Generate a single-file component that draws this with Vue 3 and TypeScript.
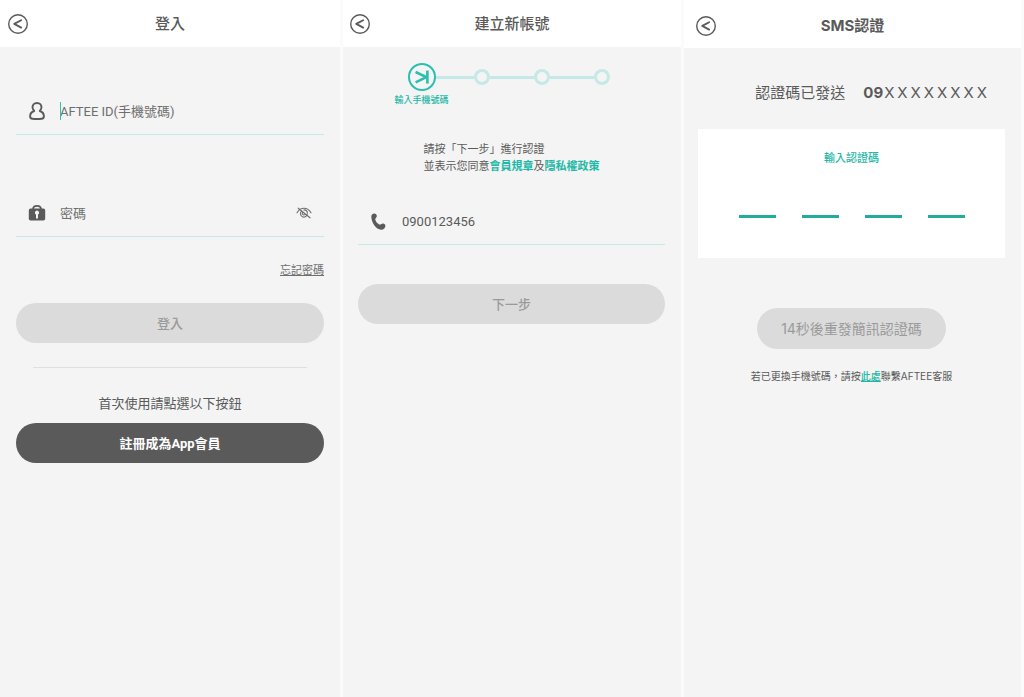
<script setup lang="ts">
import { ref } from 'vue'

const account = ref('')
const password = ref('')
const phone = ref('0900123456')
const code = ref<string[]>(['', '', '', ''])
const steps: string[] = ['輸入手機號碼', '', '', '']
const prefix = '09'
const masked: string[] = 'XXXXXXXX'.split('')
const seconds = ref(14)
</script>

<template>
  <main class="screens">
    <section class="panel">
      <header class="bar">
        <button type="button" class="back" aria-label="返回">
          <svg viewBox="0 0 20 20" width="20" height="20">
            <circle cx="10" cy="10" r="9.3" />
            <path d="M13.2 6.200 6.200 9.900l7 3.700" />
          </svg>
        </button>
        <h1>登入</h1>
      </header>
      <form class="body login" @submit.prevent>
        <label class="field">
          <svg class="icon" viewBox="0 0 18 20" width="18" height="20">
            <path
              class="outline"
              d="M9 2c2.700 0 4.500 1.900 4.500 4.300 0 1.500-.7 2.600-1.700 3.700 2.500.8 4.100 2.600 4.100 5.300 0 1.600-.7 2.400-2.300 2.500-3 .3-6.200.3-9.200 0-1.600-.1-2.300-.9-2.300-2.500 0-2.700 1.600-4.500 4.100-5.300-1-1.100-1.700-2.200-1.700-3.700C4.500 3.900 6.300 2 9 2z"
            />
          </svg>
          <span class="entry focused">
            <input v-model="account" type="text" placeholder="AFTEE ID(手機號碼)" aria-label="AFTEE ID" />
          </span>
        </label>
        <div class="field second">
          <svg class="icon" viewBox="0 0 18 20" width="18" height="20">
            <path class="outline" d="M5.200 6.500V5.800C5.200 3.800 6.800 2.900 9 2.900s3.800.9 3.800 2.900v.7" />
            <path
              class="solid"
              fill-rule="evenodd"
              d="M2.600 5.600h12.800a1.800 1.800 0 0 1 1.800 1.800v8.300a1.800 1.800 0 0 1-1.800 1.800H2.600a1.800 1.800 0 0 1-1.800-1.800V7.400a1.800 1.800 0 0 1 1.800-1.800zM9 7.600a2.100 2.100 0 0 0-1 3.950V15.500h2v-3.950A2.100 2.100 0 0 0 9 7.600z"
            />
          </svg>
          <span class="entry">
            <input v-model="password" type="password" placeholder="密碼" aria-label="密碼" />
          </span>
          <button type="button" class="eye" aria-label="顯示密碼">
            <svg viewBox="0 0 16 14" width="16" height="14">
              <path d="M1 6.800C2.700 3.700 5.100 2.200 8 2.200s5.300 1.500 7 4.600" />
              <path d="M11.200 8.200a3.400 3.400 0 1 1-5.600-3.100M8 3.900a3.400 3.400 0 0 1 3.400 3.200" />
              <path d="M6.600 6.500a1.500 1.500 0 0 0 2.100 2.100M2.200 2.200l11.800 9.600" />
            </svg>
          </button>
        </div>
        <a class="forgot" href="#forgot">忘記密碼</a>
        <button type="submit" class="pill" disabled>登入</button>
        <hr />
        <p class="hint">首次使用請點選以下按鈕</p>
        <button type="button" class="pill dark">註冊成為App會員</button>
      </form>
    </section>

    <section class="panel">
      <header class="bar create">
        <button type="button" class="back" aria-label="返回">
          <svg viewBox="0 0 20 20" width="20" height="20">
            <circle cx="10" cy="10" r="9.3" />
            <path d="M13.2 6.200 6.200 9.900l7 3.700" />
          </svg>
        </button>
        <h1>建立新帳號</h1>
      </header>
      <form class="body signup" @submit.prevent>
        <ol class="steps">
          <li v-for="(step, i) in steps" :key="i" :class="{ current: i === 0 }">
            <svg v-if="i === 0" viewBox="0 0 28 28" width="28" height="28">
              <circle cx="14" cy="14" r="13" />
              <path d="M7.600 9 18.400 14.200 7.600 19.400" />
              <path d="M19.400 7.600v13" />
            </svg>
            <i v-else class="dot"></i>
            <span v-if="step" class="caption">{{ step }}</span>
          </li>
        </ol>
        <p class="terms">
          請按「下一步」進行認證<br />並表示您同意<a href="#rules">會員規章</a>及<a href="#privacy">隱私權政策</a>
        </p>
        <label class="field">
          <svg class="icon" viewBox="0 0 18 20" width="18" height="20">
            <path
              class="solid"
              d="M1.300 5.600C1.300 3.700 2.900 2.500 4.300 2.500c1.500 0 2.500 1.100 2.500 2.500 0 1-.6 1.700-1.100 2.200-.6.600-.5 1.300-.1 2.300.7 1.600 1.900 2.900 3.300 3.700.8.500 1.500.6 2.100.1.600-.5 1.200-.9 2.100-.9 1.300 0 2.300 1.100 2.300 2.300 0 2-1.600 4-4.300 4C6 18.700 1.300 11.500 1.300 5.600z"
            />
          </svg>
          <span class="entry">
            <input v-model="phone" type="tel" aria-label="手機號碼" />
          </span>
        </label>
        <button type="submit" class="pill" disabled>下一步</button>
      </form>
    </section>

    <section class="panel verify">
      <header class="bar">
        <button type="button" class="back" aria-label="返回">
          <svg viewBox="0 0 20 20" width="20" height="20">
            <circle cx="10" cy="10" r="9.3" />
            <path d="M13.2 6.200 6.200 9.900l7 3.700" />
          </svg>
        </button>
        <h1>SMS認證</h1>
      </header>
      <form class="body" @submit.prevent>
        <p class="sent">
          <span>認證碼已發送</span>
          <span class="number"><b>{{ prefix }}</b><span class="masked"><span v-for="(digit, i) in masked" :key="i">{{ digit }}</span></span></span>
        </p>
        <fieldset class="card">
          <legend>輸入認證碼</legend>
          <div class="code">
            <input
              v-for="(_, i) in code"
              :key="i"
              v-model="code[i]"
              type="text"
              inputmode="numeric"
              maxlength="1"
              :aria-label="`第${i + 1}位`"
            />
          </div>
        </fieldset>
        <button type="button" class="pill resend" disabled>{{ seconds }}秒後重發簡訊認證碼</button>
        <p class="note">若已更換手機號碼，請按<a href="#support">此處</a>聯繫AFTEE客服</p>
      </form>
    </section>
  </main>
</template>

<style>
body {
  margin: 0;
  background: #fbfbfb;
}
</style>

<style scoped>
.screens {
  display: grid;
  grid-template-columns: 340fr 338fr 337fr;
  gap: 3px;
  padding-right: 3px;
  min-height: 100vh;
  box-sizing: border-box;
  color: #5a5a5a;
  font-family: Roboto, "Noto Sans CJK TC", sans-serif;
  font-size: 13px;
}

.panel {
  background: #f4f4f4;
  min-width: 0;
}

.verify {
  font-family: Inter, "Noto Sans CJK TC", sans-serif;
}

.bar {
  display: grid;
  grid-template-columns: 1fr auto 1fr;
  align-items: center;
  height: 47px;
  padding: 0 8px;
  box-sizing: border-box;
  background: #fff;
}

.create {
  padding: 0 7px;
}

.verify .bar {
  height: 48px;
  padding: 3px 12px 0;
}

h1 {
  margin: 0;
  font-size: 15px;
  line-height: 20px;
  font-weight: 500;
}

.verify h1 {
  font-weight: 700;
}

button,
input {
  font: inherit;
  color: inherit;
  padding: 0;
  border: 0;
  background: none;
}

p {
  margin: 0;
}

svg {
  display: block;
  fill: none;
  stroke-linecap: round;
  stroke-linejoin: round;
}

.back {
  justify-self: start;
  stroke: #5a5a5a;
  stroke-width: 1.4;
}

.back path {
  stroke-width: 1.8;
}

.body {
  display: flex;
  flex-direction: column;
  padding: 0 16px;
}

.login {
  padding-top: 40px;
}

.signup {
  padding-top: 16px;
  padding-left: 15px;
}

.field {
  display: flex;
  align-items: center;
  gap: 14px;
  height: 48px;
  padding: 0 12px;
  box-sizing: border-box;
  border-bottom: 1px solid #c3eae6;
}

.second {
  margin-top: 54px;
}

.icon {
  flex: none;
}

.outline {
  stroke: #5a5a5a;
  stroke-width: 1.9;
}

.solid {
  fill: #5a5a5a;
}

.entry {
  position: relative;
  flex: 1;
  min-width: 0;
}

.entry input {
  display: block;
  width: 100%;
  height: 22px;
  padding-top: 2px;
  box-sizing: border-box;
  outline: none;
}

.entry input::placeholder {
  color: #6e6e6e;
  opacity: 1;
}

.focused::before {
  content: "";
  position: absolute;
  left: 0;
  top: 2px;
  width: 1px;
  height: 18px;
  background: #2bc4b2;
}

.eye {
  flex: none;
  stroke: #6e6e6e;
  stroke-width: 1.1;
}

.forgot {
  align-self: flex-end;
  margin: 26px 0 24px;
  font-size: 11px;
  line-height: 16px;
  color: #6e6e6e;
  text-decoration: underline;
}

.pill {
  height: 40px;
  padding-bottom: 2px;
  border-radius: 21px;
  background: #dbdbdb;
  color: #9a9a9a;
  font-weight: 500;
}

.dark {
  background: #5a5a5a;
  color: #fff;
  font-weight: 700;
}

hr {
  align-self: stretch;
  margin: 24px 17px 26px;
  border: 0;
  border-top: 1px solid #dfdfdf;
}

.hint {
  margin-bottom: 9px;
  line-height: 20px;
  text-align: center;
}

.steps {
  display: flex;
  justify-content: center;
  height: 43px;
  margin: 0;
  padding: 0 6px 0 0;
  list-style: none;
}

.steps li {
  display: flex;
  align-items: center;
  height: 28px;
}

.steps .current {
  flex-direction: column;
  gap: 3px;
  width: 28px;
  height: 43px;
}

.current svg {
  flex: none;
  stroke: #2bbfae;
  stroke-width: 2;
}

.current path {
  stroke-width: 2.6;
  stroke-linecap: butt;
}

.steps li + li::before {
  content: "";
  width: 44px;
  height: 3px;
  background: #c5e9e6;
}

.steps .current + li::before {
  width: 38px;
}

.dot {
  width: 16px;
  height: 16px;
  box-sizing: border-box;
  border: 3px solid #c5e9e6;
  border-radius: 50%;
}

.caption {
  font-size: 9px;
  line-height: 12px;
  font-weight: 500;
  white-space: nowrap;
  color: #1fb8a6;
}

.terms {
  align-self: center;
  margin: 35px 0 22px;
  font-size: 11px;
  line-height: 17px;
}

.terms a {
  color: #1fb8a6;
  font-weight: 700;
  text-decoration: none;
}

.signup .pill {
  margin-top: 39px;
}

.verify .body {
  padding: 35px 16px 0 14px;
}

.sent {
  display: flex;
  justify-content: flex-end;
  gap: 18px;
  padding-right: 18px;
  font-size: 15px;
  line-height: 20px;
}

.number {
  display: flex;
  gap: 1px;
}

.number b {
  font-weight: 700;
}

.masked {
  display: flex;
  gap: 3px;
}

.card {
  display: flex;
  flex-direction: column;
  align-items: center;
  min-width: 0;
  margin: 26px 0 50px;
  padding: 20px 0 40px;
  border: 0;
  background: #fff;
}

.card legend {
  float: left;
  padding: 0;
  font-size: 11px;
  line-height: 18px;
  font-weight: 500;
  color: #1fb8a6;
}

.code {
  display: flex;
  gap: 26px;
  margin-top: 20px;
}

.code input {
  width: 37px;
  height: 31px;
  box-sizing: border-box;
  border-bottom: 3px solid #22ac9c;
  text-align: center;
  outline: none;
}

.resend {
  align-self: center;
  height: 41px;
  padding: 0 24px 2px;
  font-size: 14px;
  font-weight: 400;
}

.note {
  margin-top: 19px;
  font-size: 10px;
  line-height: 16px;
  text-align: center;
}

.note a {
  color: #1fb8a6;
  font-weight: 500;
}
</style>
